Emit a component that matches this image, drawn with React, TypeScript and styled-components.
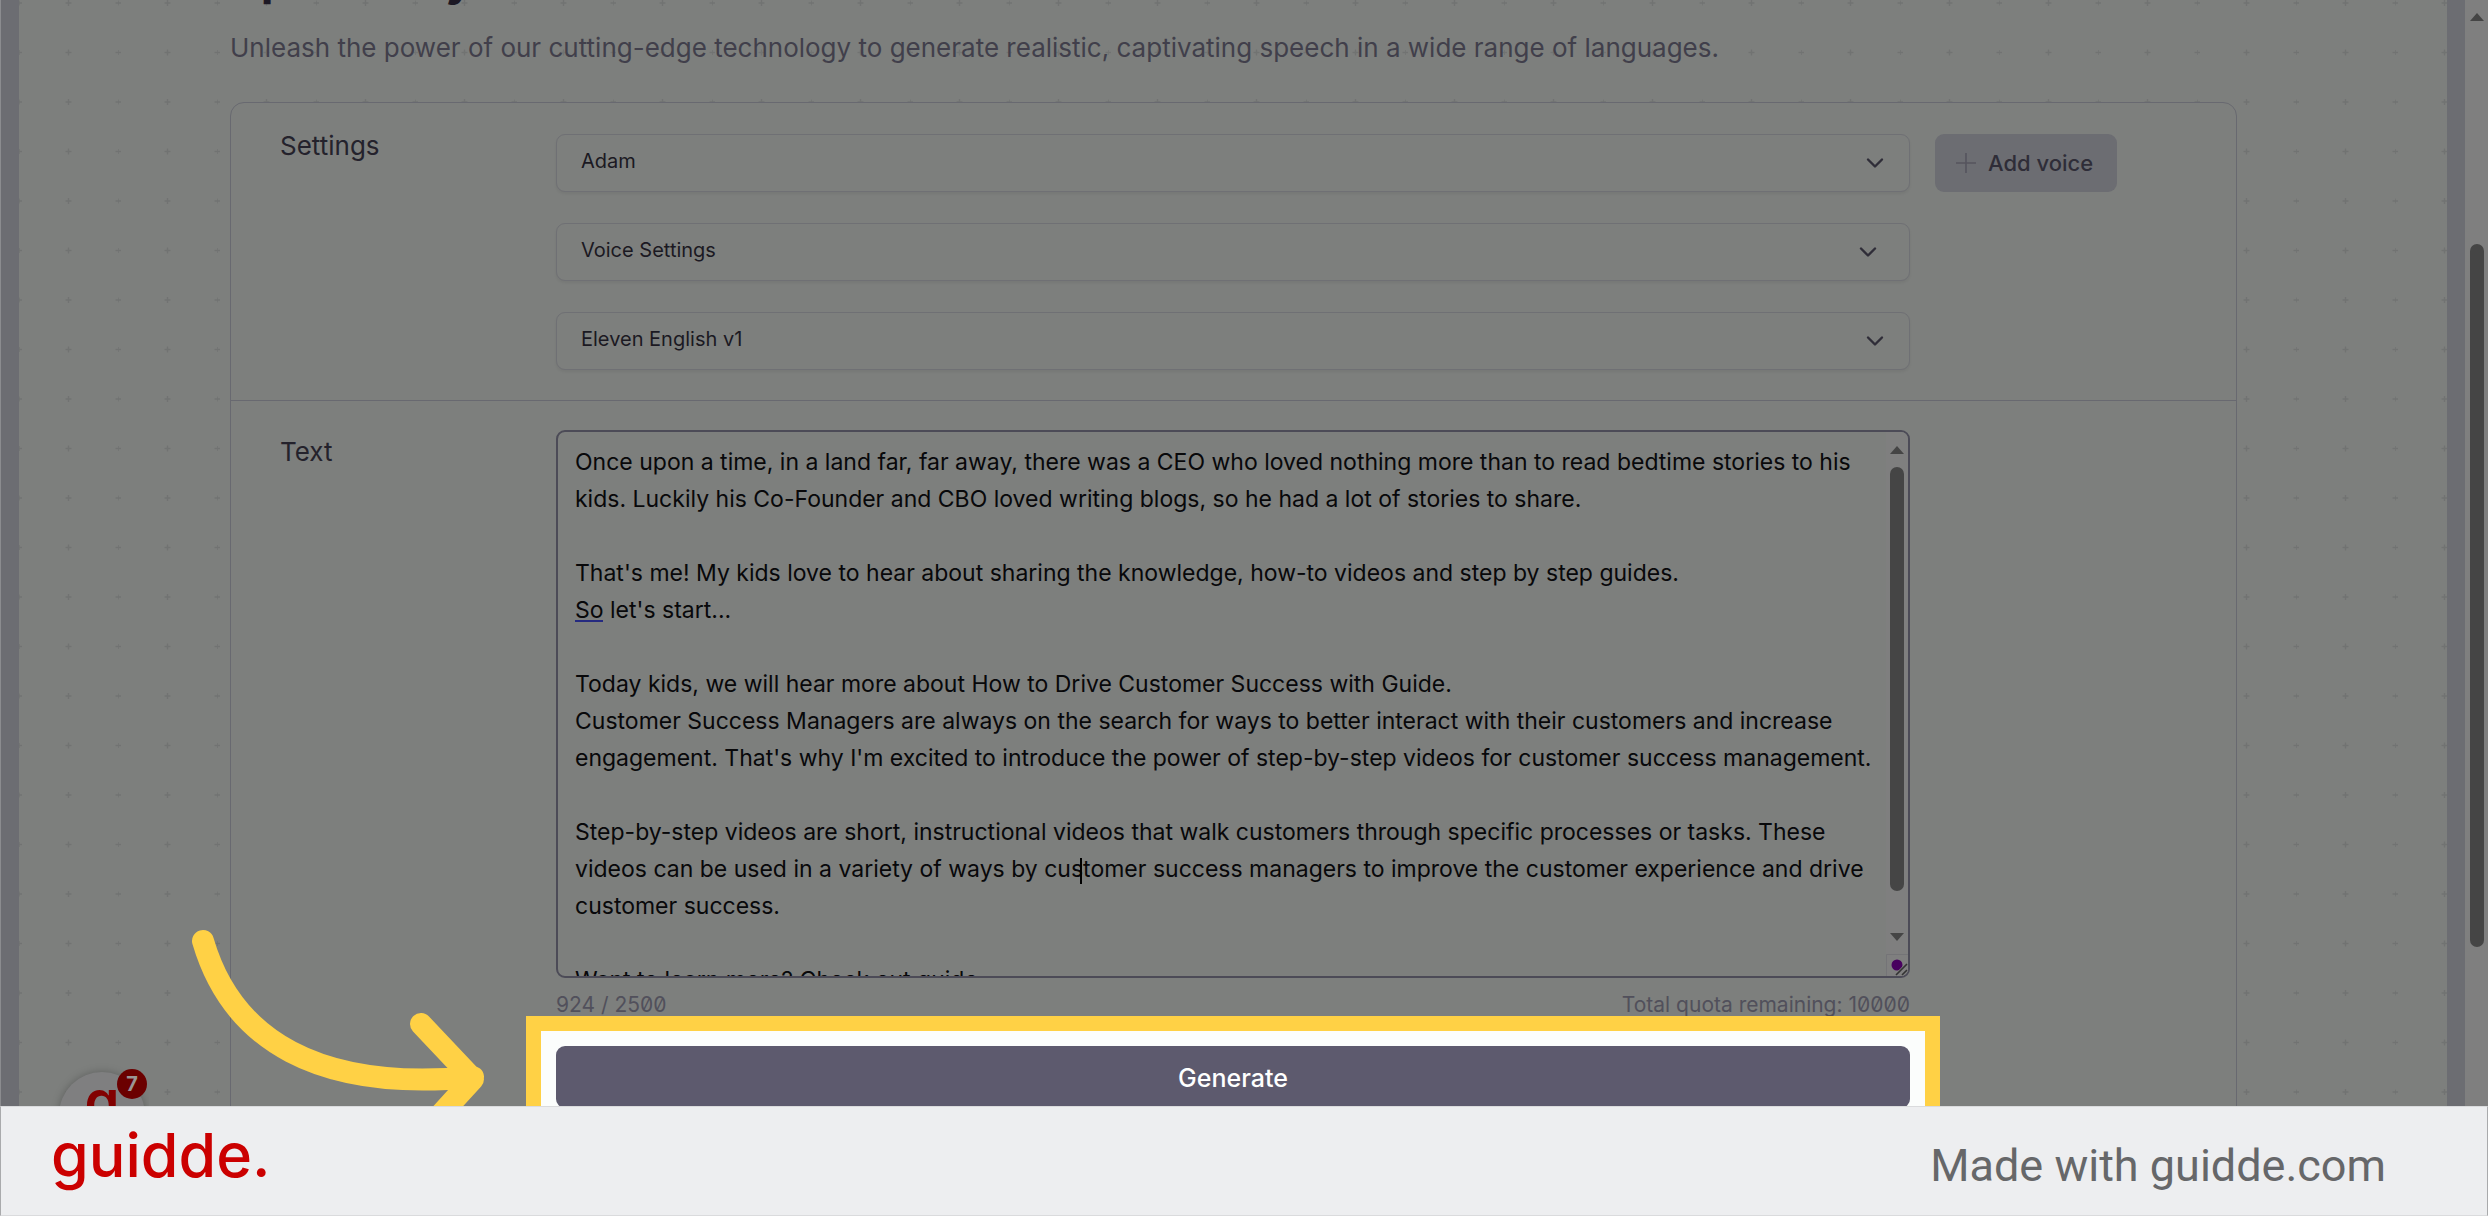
import React from "react";
import styled, { createGlobalStyle } from "styled-components";

const bodyFont = `Inter, "Noto Sans", sans-serif`;
const plusTile = `url("data:image/svg+xml,%3Csvg xmlns='http://www.w3.org/2000/svg' width='99' height='99'%3E%3Cpath d='M0 3h3M96.500 3h2.500M0 .5v5M46.500 3h6M49.500 0v6M0 52.500h3M96.500 52.500h2.500M0 50v5M46.500 52.500h6M49.500 49.500v6' stroke='%23717372' stroke-width='1.500'/%3E%3C/svg%3E")`;

const GlobalStyle = createGlobalStyle`
  * { box-sizing: border-box; }
  body { margin: 0; background: #7d7f7d; font-family: ${bodyFont}; }
  button, select, textarea { font-family: inherit; margin: 0; }
`;

const Shell = styled.div`
  height: 100vh;
  display: flex;
  flex-direction: column;
  overflow: hidden;
  position: relative;
`;

const Stage = styled.div`
  flex: 1;
  min-height: 0;
  display: flex;
  overflow: hidden;
  border-left: 1px solid #8b8c8f;
`;

const Edge = styled.div`
  flex: none;
  width: 18px;
  background: #6c6d72;
`;

const Page = styled.main`
  flex: 1;
  min-width: 0;
  height: 1200px;
  padding: 0 210px 0 211px;
  background: #7d7f7d ${plusTile} 0 0;
`;

const Title = styled.h1`
  margin: -46px 0 0;
  font-size: 47px;
  line-height: 48px;
  font-weight: 700;
  color: #1c1824;
`;

const Subtitle = styled.p`
  margin: 26px 0 34px;
  font-size: 26px;
  line-height: 40px;
  color: #413f4b;
`;

const Card = styled.div`
  border: 1px solid #686970;
  border-radius: 14px;
  height: 1200px;
  background: #7d7f7d;
`;

const Section = styled.section`
  display: grid;
  grid-template-columns: 251px minmax(0, 1fr) 251px;
  column-gap: 25px;
  align-items: start;
  padding: 31px 50px 30px 49px;
  & + & {
    border-top: 1px solid #686970;
    padding-top: 29px;
  }
`;

const SectionTitle = styled.h2`
  margin: -6px 0 0;
  font-size: 26px;
  line-height: 36px;
  font-weight: 400;
  color: #24222c;
`;

const EditorLabel = styled.label`
  padding-top: 4px;
  font-size: 26px;
  line-height: 36px;
  color: #24222c;
`;

const Fields = styled.div`
  display: flex;
  flex-direction: column;
  gap: 31px;
`;

const Field = styled.div`
  display: grid;
  align-items: center;
  > * { grid-area: 1 / 1; }
`;

const controlStyle = `
  width: 100%;
  height: 58px;
  padding: 0 24px 4px;
  border: 1px solid #6f7074;
  border-radius: 9px;
  background: #7d7f7d;
  box-shadow: 0 2px 3px rgba(0, 0, 0, 0.06);
  color: #1b1922;
  font-size: 20px;
  text-align: left;
`;

const Select = styled.select`
  appearance: none;
  ${controlStyle}
`;

const Disclosure = styled.button`
  ${controlStyle}
`;

const Chevron = styled.svg<{ $inset: number }>`
  justify-self: end;
  margin-right: ${(p) => p.$inset}px;
  width: 18px;
  height: 18px;
  pointer-events: none;
`;

const AddVoice = styled.button`
  justify-self: start;
  display: flex;
  align-items: center;
  gap: 11px;
  height: 58px;
  padding: 0 24px 0 20px;
  border: 0;
  border-radius: 9px;
  background: #6c6d72;
  color: #2f2d38;
  font-size: 22px;
  font-weight: 500;
`;

const EditorColumn = styled.div`
  display: flex;
  flex-direction: column;
`;

const Editor = styled.div`
  position: relative;
  display: flex;
  height: 548px;
  border: 2px solid #4c4b57;
  border-radius: 9px;
  overflow: hidden;
`;

const TextArea = styled.textarea`
  flex: 1;
  min-width: 0;
  padding: 12px 4px 0 17px;
  border: 0;
  outline: 0;
  resize: none;
  overflow: hidden;
  background: transparent;
  color: #08080a;
  font-size: 23px;
  line-height: 37px;
`;

const EditorRail = styled.div`
  flex: none;
  width: 22px;
  display: flex;
  flex-direction: column;
  align-items: center;
  padding-top: 14px;
  background: #7f7f7f;
`;

const Thumb = styled.div`
  flex: 1;
  width: 14px;
  border-radius: 7px;
  background: #454545;
  margin: 13px 0 42px;
`;

const Arrow = styled.svg`
  display: block;
  flex: none;
  width: 14px;
  height: 8px;
  fill: #454545;
`;

const Resizer = styled.svg`
  flex: none;
  width: 22px;
  height: 22px;
  margin-top: 13px;
`;

const SpellMark = styled.span`
  position: absolute;
  left: 17px;
  top: 188px;
  width: 28px;
  height: 2px;
  background: #252a80;
`;

const Caret = styled.span`
  position: absolute;
  left: 522px;
  top: 426px;
  width: 2px;
  height: 26px;
  background: #000;
`;

const Counts = styled.div`
  display: flex;
  justify-content: space-between;
  margin: 11px 0 25px;
  font-size: 21px;
  line-height: 32px;
  color: #51505b;
  font-feature-settings: "zero";
`;

const Highlight = styled.div`
  margin: -30px -30px 0;
  position: relative;
  padding: 15px;
  border: 15px solid #ffd145;
  background: #fbfdfc;
`;

const Generate = styled.button`
  display: block;
  width: 100%;
  height: 62px;
  padding: 1px 0 0;
  border: 0;
  border-radius: 9px;
  background: #5d5a6e;
  color: #fff;
  font-size: 25px;
  font-weight: 500;
`;

const PageRail = styled.div`
  flex: none;
  width: 23px;
  display: flex;
  flex-direction: column;
  align-items: center;
  padding-top: 13px;
  background: #7f7f7f;
`;

const PageThumb = styled.div`
  width: 14px;
  height: 703px;
  margin-top: 223px;
  border-radius: 7px;
  background: #454545;
`;

const Pointer = styled.svg`
  position: absolute;
  left: 180px;
  bottom: 110px;
  width: 320px;
  height: 186px;
`;

const Launcher = styled.div`
  position: absolute;
  left: 51px;
  bottom: 110px;
  width: 98px;
  height: 54px;
  overflow: hidden;
`;

const LauncherDisc = styled.div`
  width: 86px;
  height: 86px;
  margin: 20px 0 0 8px;
  border-radius: 50%;
  background: #7f7f80;
  box-shadow: 0 0 8px rgba(0, 0, 0, 0.25);
  color: #820000;
  font-size: 56px;
  line-height: 58px;
  font-weight: 600;
  text-align: center;
`;

const Count = styled.span`
  position: absolute;
  right: 2px;
  top: 17px;
  width: 30px;
  height: 30px;
  border-radius: 50%;
  background: #6b0000;
  color: #9a9595;
  font-size: 20px;
  line-height: 30px;
  font-weight: 700;
  text-align: center;
`;

const Footer = styled.footer`
  flex: none;
  height: 110px;
  display: flex;
  align-items: center;
  justify-content: space-between;
  padding: 0 101px 0 50px;
  border: 1px solid #dadbdd;
  border-left-color: #a9aaac;
  border-right-color: #a9aaac;
  background: #edeef0;
`;

const Brand = styled.div`
  padding-bottom: 12px;
  color: #cb0000;
  font-size: 61px;
  line-height: 80px;
  font-weight: 500;
`;

const MadeWith = styled.div`
  padding-top: 9px;
  font-family: Roboto, sans-serif;
  font-size: 45px;
  line-height: 56px;
  color: #666769;
`;

const story = `Once upon a time, in a land far, far away, there was a CEO who loved nothing more than to read bedtime stories to his
kids. Luckily his Co-Founder and CBO loved writing blogs, so he had a lot of stories to share.

That's me! My kids love to hear about sharing the knowledge, how-to videos and step by step guides.
So let's start...

Today kids, we will hear more about How to Drive Customer Success with Guide.
Customer Success Managers are always on the search for ways to better interact with their customers and increase
engagement. That's why I'm excited to introduce the power of step-by-step videos for customer success management.

Step-by-step videos are short, instructional videos that walk customers through specific processes or tasks. These
videos can be used in a variety of ways by customer success managers to improve the customer experience and drive
customer success.

Want to learn more? Check out guide.`;

const ChevronIcon = ({ inset }: { inset: number }) => (
  <Chevron $inset={inset} viewBox="0 0 18 18" aria-hidden="true">
    <path d="M2 5.500l7 7 7-7" fill="none" stroke="#2f2d38" strokeWidth="2.400" strokeLinecap="round" strokeLinejoin="round" />
  </Chevron>
);

const ArrowUp = () => (
  <Arrow viewBox="0 0 14 8" aria-hidden="true"><path d="M7 0l7 8H0z" /></Arrow>
);
const ArrowDown = () => (
  <Arrow viewBox="0 0 14 8" aria-hidden="true"><path d="M0 0h14L7 8z" /></Arrow>
);

export default function App() {
  return (
    <>
      <GlobalStyle />
      <Shell>
        <Stage>
          <Edge />
          <Page>
            <Title>Speech Synthesis</Title>
            <Subtitle>
              Unleash the power of our cutting-edge technology to generate realistic, captivating speech in a wide range of languages.
            </Subtitle>
            <Card>
              <Section>
                <SectionTitle>Settings</SectionTitle>
                <Fields>
                  <Field>
                    <Select aria-label="Voice" defaultValue="Adam"><option>Adam</option></Select>
                    <ChevronIcon inset={26} />
                  </Field>
                  <Field>
                    <Disclosure type="button" aria-expanded="false">Voice Settings</Disclosure>
                    <ChevronIcon inset={33} />
                  </Field>
                  <Field>
                    <Select aria-label="Model" defaultValue="Eleven English v1"><option>Eleven English v1</option></Select>
                    <ChevronIcon inset={26} />
                  </Field>
                </Fields>
                <AddVoice type="button">
                  <svg width="22" height="22" viewBox="0 0 22 22" aria-hidden="true">
                    <path d="M11 1v20M1 11h20" stroke="#55545e" strokeWidth="1.600" />
                  </svg>
                  Add voice
                </AddVoice>
              </Section>
              <Section>
                <EditorLabel htmlFor="story">Text</EditorLabel>
                <EditorColumn>
                  <Editor>
                    <TextArea id="story" defaultValue={story} spellCheck={false} />
                    <SpellMark />
                    <Caret />
                    <EditorRail>
                      <ArrowUp />
                      <Thumb />
                      <ArrowDown />
                      <Resizer viewBox="0 0 22 22" aria-hidden="true">
                        <path d="M.5 22V.5H22" fill="none" stroke="#747477" />
                        <circle cx="11" cy="11" r="5.500" fill="#48005f" />
                        <path d="M10 21L21 10M16 21l5-5" stroke="#7f7f7f" strokeWidth="3" />
                        <path d="M10 21L21 10M16 21l5-5" stroke="#333" strokeWidth="1.600" />
                      </Resizer>
                    </EditorRail>
                  </Editor>
                  <Counts>
                    <span>924 / 2500</span>
                    <span>Total quota remaining: 10000</span>
                  </Counts>
                  <Highlight>
                    <Generate type="button">Generate</Generate>
                  </Highlight>
                </EditorColumn>
              </Section>
            </Card>
          </Page>
          <Edge />
          <PageRail>
            <ArrowUp />
            <PageThumb />
          </PageRail>
        </Stage>
        <Launcher>
          <LauncherDisc>g</LauncherDisc>
          <Count>7</Count>
        </Launcher>
        <Pointer viewBox="180 920 320 186" aria-hidden="true">
          <path
            d="M203 941C232 1040 318 1092 473 1077M421 1024L473 1079L421 1136"
            fill="none"
            stroke="#ffd145"
            strokeWidth="22"
            strokeLinecap="round"
            strokeLinejoin="round"
          />
        </Pointer>
        <Footer>
          <Brand>guidde.</Brand>
          <MadeWith>Made with guidde.com</MadeWith>
        </Footer>
      </Shell>
    </>
  );
}
